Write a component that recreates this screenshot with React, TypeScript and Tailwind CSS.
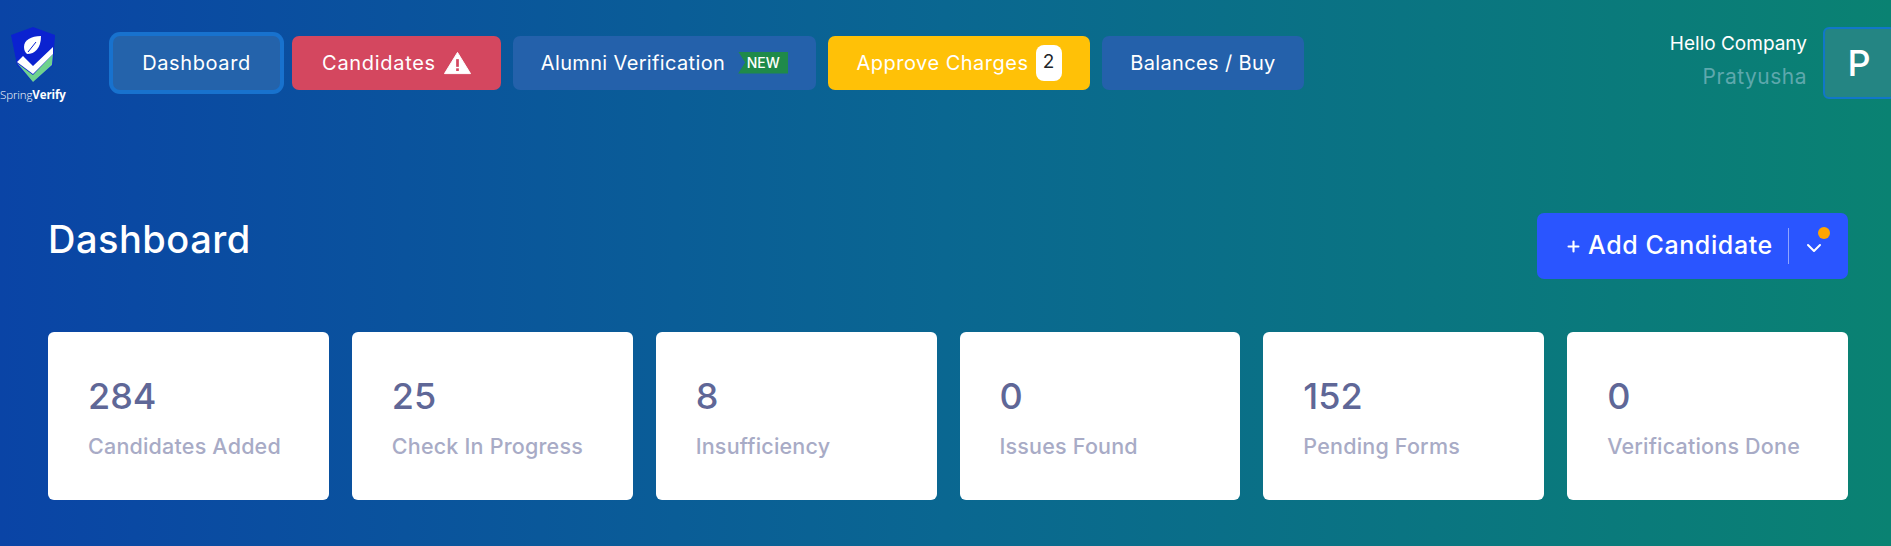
import { ChevronDown, Plus } from 'lucide-react';

const font = "font-['Inter','Noto_Sans',sans-serif]";

const stats = [
  { value: '284', label: 'Candidates Added' },
  { value: '25', label: 'Check In Progress' },
  { value: '8', label: 'Insufficiency' },
  { value: '0', label: 'Issues Found' },
  { value: '152', label: 'Pending Forms' },
  { value: '0', label: 'Verifications Done' },
];

function Logo() {
  return (
    <div className="w-[113px] shrink-0 self-start flex flex-col">
      <svg viewBox="0 0 44 55" className="w-[44px] h-[55px] ml-[11px]">
        <path d="M22 0 L44 8 L42 38 L22 55 L6 38 L0 8 Z" fill="#0b22d0" />
        <path d="M6 36 L22 48 L42 27 L41 38 L22 55 Z" fill="#6fd28e" />
        <path d="M6 35 L12 29 L22 39 L42 20 L42 27 L22 47 Z" fill="#fff" />
        <path d="M30 9 C20 9 13 13 13 20 C13 23 14 25 16 27 C24 27 30 21 30 9 Z" fill="#fff" />
        <path d="M17 25 L25 15" stroke="#0b22d0" strokeWidth="1" fill="none" />
      </svg>
      <span className="mt-[6px] text-[11.5px] leading-[14px] text-white font-light font-['Open_Sans',sans-serif] tracking-[-0.1px]">
        Spring<b className="font-bold">Verify</b>
      </span>
    </div>
  );
}

function NavButton({ className, children }: { className: string; children: React.ReactNode }) {
  return (
    <div className={`h-[54px] rounded-[7px] flex items-center justify-center text-white text-[20px] ${className}`}>
      {children}
    </div>
  );
}

function Warning() {
  return (
    <svg viewBox="0 0 28 24" className="w-[27px] h-[24px] ml-[8px]">
      <path d="M14 1 L27.5 23 H0.5 Z" fill="#fff" stroke="#fff" strokeLinejoin="round" />
      <rect x="12.6" y="8" width="2.8" height="8" fill="#d4475f" />
      <rect x="12.6" y="17.5" width="2.8" height="2.8" fill="#d4475f" />
    </svg>
  );
}

export default function App() {
  return (
    <div className={`w-full h-[546px] overflow-hidden bg-[linear-gradient(to_right,#0a44a6,#0a6791_50%,#0a8272)] ${font}`}>
      <header className="flex items-center h-[99px] pt-[27px]">
        <Logo />
        <nav className="flex items-center gap-3 -mt-[1px]">
          <NavButton className="w-[167px] bg-[#2463ab] ring-[4px] ring-[#1872ce] tracking-[0.6px]">Dashboard</NavButton>
          <NavButton className="w-[209px] bg-[#d4475f] tracking-[0.7px]">
            Candidates
            <Warning />
          </NavButton>
          <NavButton className="w-[303px] bg-[#2461ab] tracking-[0.35px]">
            Alumni Verification
            <span className="relative ml-[13px] h-[22px] w-[50px] bg-[#1f8a4a] flex items-center justify-center text-[14px] font-medium tracking-normal [clip-path:polygon(0_0,100%_0,100%_100%,0_100%,14%_50%)]">
              NEW
            </span>
          </NavButton>
          <NavButton className="w-[262px] bg-[#ffc107] tracking-[0.5px]">
            Approve Charges
            <span className="ml-[7px] w-[26px] h-[36px] rounded-[8px] bg-white text-[#212529] flex items-center justify-center text-[19px] tracking-normal">
              2
            </span>
          </NavButton>
          <NavButton className="w-[202px] bg-[#2461ab] tracking-[0.35px]">Balances / Buy</NavButton>
        </nav>
        <div className="ml-auto flex items-center gap-[16px] -mr-1">
          <div className="text-right -mt-[4px]">
            <div className="text-white text-[19px] leading-[26px] mt-[1px]">Hello Company</div>
            <div className="text-[#5ea8ad] text-[21px] leading-[30px] mt-[5px] tracking-[0.5px]">Pratyusha</div>
          </div>
          <div className="w-[72px] h-[72px] rounded-[6px] border-2 border-[#1177c9] bg-[#248583] text-white text-[36px] font-medium flex items-center justify-center">
            P
          </div>
        </div>
      </header>

      <main className="pl-12 pr-[43px] pt-[114px]">
        <div className="flex items-center justify-between h-[66px]">
          <h1 className="text-white text-[38px] font-medium tracking-[0.5px] -mt-[14px]">Dashboard</h1>
          <div className="relative w-[311px] h-[66px] rounded-[7px] bg-[#2a55ff] text-white flex items-center">
            <Plus className="w-[17px] h-[17px] ml-[28px]" strokeWidth={3} />
            <span className="ml-[6px] text-[25px] font-medium tracking-[0.6px]">Add Candidate</span>
            <span className="absolute left-[251px] top-[15px] w-px h-[36px] bg-[#8fa5ff]" />
            <ChevronDown className="absolute left-[265px] top-[23px] w-[24px] h-[24px]" strokeWidth={2} />
            <span className="absolute left-[281px] top-[14px] w-[12px] h-[12px] rounded-full bg-[#ffa500]" />
          </div>
        </div>

        <div className="grid grid-cols-6 gap-[23px] mt-[53px]">
          {stats.map((s) => (
            <div key={s.label} className="h-[168px] rounded-[6px] bg-white pl-[40px] pt-[40px]">
              <div className="text-[#5f6797] text-[36px] leading-[48px] font-medium">{s.value}</div>
              <div className="mt-[11px] text-[#a8abc6] text-[21.5px] leading-[30px] font-medium tracking-[0.2px]">{s.label}</div>
            </div>
          ))}
        </div>
      </main>
    </div>
  );
}
